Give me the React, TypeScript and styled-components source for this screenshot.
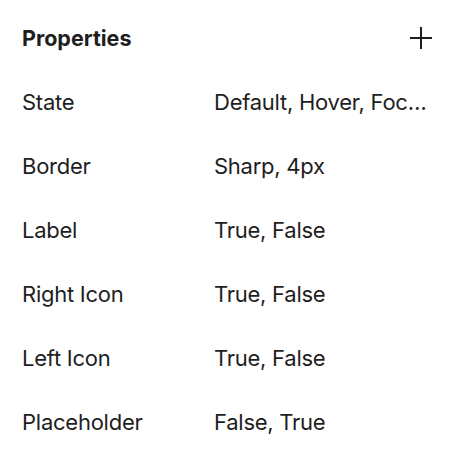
import React from "react";
import styled, { createGlobalStyle } from "styled-components";

const Global = createGlobalStyle`
  html, body { margin: 0; padding: 0; background: #ffffff; }
  body { font-family: Inter, "Noto Sans", sans-serif; color: #1e1e1e; }
  * { box-sizing: border-box; }
`;

const Panel = styled.section`
  width: 454px;
  padding: 5px 22px 0 22px;
  display: flex;
  flex-direction: column;
`;

const Header = styled.header`
  height: 65px;
  display: flex;
  align-items: center;
  justify-content: space-between;
`;

const Title = styled.h2`
  margin: 0;
  font-size: 21.5px;
  font-weight: 700;
  line-height: 26px;
  letter-spacing: 0;
`;

const AddButton = styled.button`
  width: 22px;
  height: 22px;
  padding: 0;
  border: none;
  background: transparent;
  display: flex;
  align-items: center;
  justify-content: center;
  color: #1e1e1e;
  cursor: pointer;
`;

const Row = styled.div`
  height: 64px;
  display: grid;
  grid-template-columns: 192px 1fr;
  align-items: center;
  font-size: 22px;
  line-height: 26px;
  letter-spacing: -0.25px;
`;

const Name = styled.span`
  white-space: nowrap;
`;

const Value = styled.span`
  white-space: nowrap;
  overflow: hidden;
  text-overflow: ellipsis;
  min-width: 0;
`;

const rows: [string, string][] = [
  ["State", "Default, Hover, Focus, Disabled"],
  ["Border", "Sharp, 4px"],
  ["Label", "True, False"],
  ["Right Icon", "True, False"],
  ["Left Icon", "True, False"],
  ["Placeholder", "False, True"],
];

export default function App() {
  return (
    <>
      <Global />
      <Panel>
        <Header>
          <Title>Properties</Title>
          <AddButton aria-label="Add property">
            <svg width="22" height="22" viewBox="0 0 22 22" fill="none">
              <path d="M11 0V22M0 11H22" stroke="currentColor" strokeWidth="2" />
            </svg>
          </AddButton>
        </Header>
        {rows.map(([k, v]) => (
          <Row key={k}>
            <Name>{k}</Name>
            <Value>{v}</Value>
          </Row>
        ))}
      </Panel>
    </>
  );
}
